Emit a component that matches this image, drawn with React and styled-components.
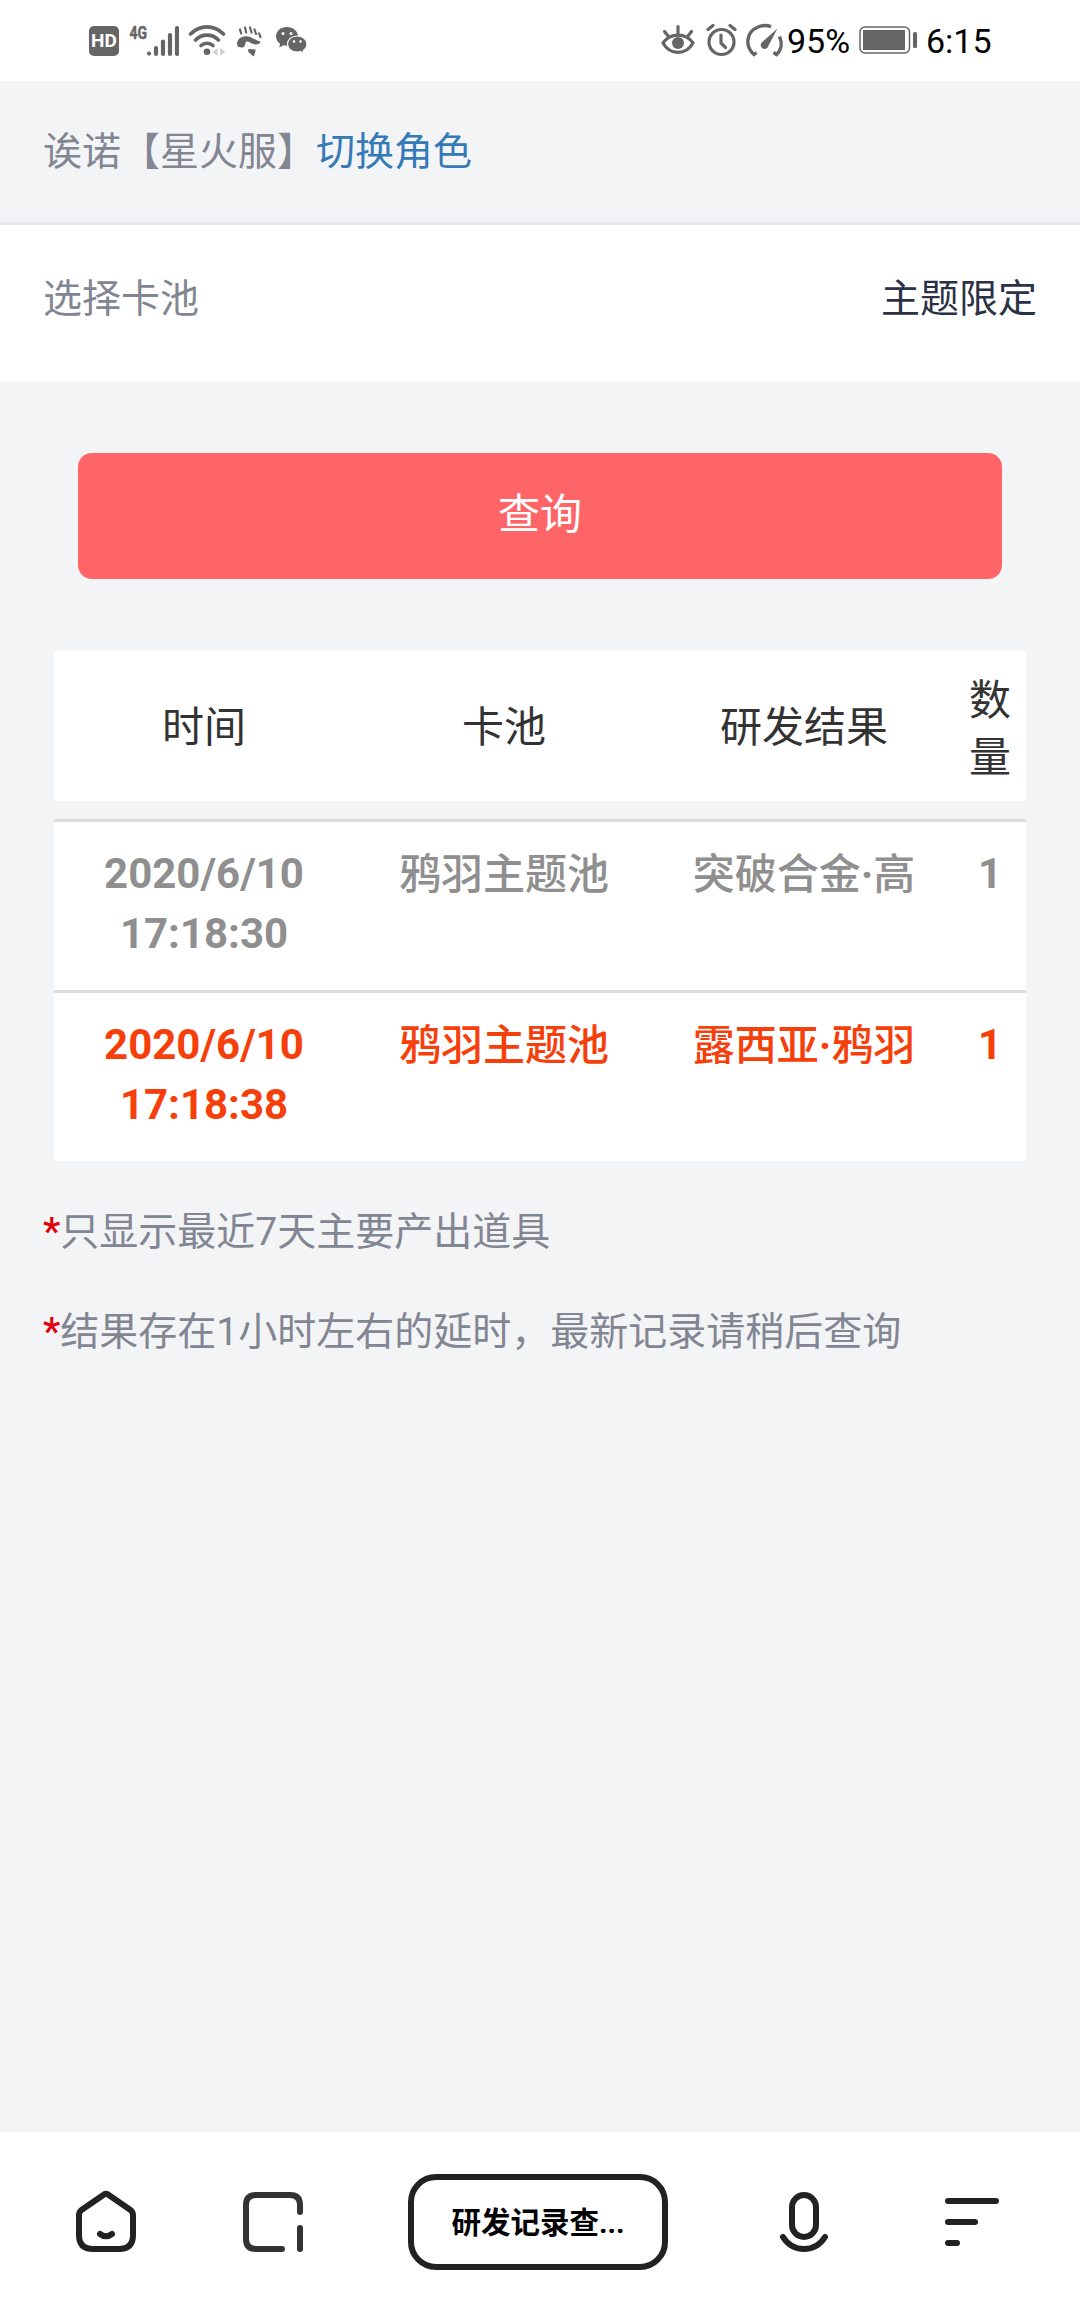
import React from "react";
import styled, { createGlobalStyle } from "styled-components";

const GlobalStyle = createGlobalStyle`
  * {
    box-sizing: border-box;
  }

  body {
    margin: 0;
    background-color: #f3f4f6;
    font-family: Roboto, "Noto Sans CJK SC", sans-serif;
  }
`;

// Styled Components
const Page = styled.div`
  display: flex;
  flex-direction: column;
  width: 1080px;
  height: 2312px;
`;

const StatusBar = styled.header`
  display: flex;
  justify-content: space-between;
  height: 81px;
  padding: 0 90px 0 89px;
  background-color: #fff;
`;

const StatusGroup = styled.div`
  display: flex;
  align-items: center;
  height: 80px;
  color: #656565;
`;

const StatusIcon = styled.svg`
  display: block;
  flex: none;
  margin-left: ${(props) => props.$gap || 0}px;
`;

const StatusText = styled.span`
  width: ${(props) => props.$width}px;
  margin-left: ${(props) => props.$gap}px;
  padding-top: 1px;
  color: #000;
  font-size: 34px;
  line-height: 40px;
  white-space: nowrap;
`;

const HdBadge = styled.span`
  width: 30px;
  height: 30px;
  margin-top: 2px;
  border-radius: 5px;
  background-color: #656565;
  color: #fff;
  font-size: 19px;
  font-weight: 700;
  line-height: 30px;
  text-align: center;
`;

const RoleBar = styled.div`
  height: 144px;
  padding: 42px 43px 0;
  border-bottom: 3px solid #e5e7ea;
  color: #828692;
  font-size: 39px;
  line-height: 58px;
`;

const SwitchLink = styled.a`
  color: #337ab7;
  text-decoration: none;
`;

const PoolRow = styled.div`
  display: flex;
  justify-content: space-between;
  height: 156px;
  padding: 45px 43px 0;
  background-color: #fff;
  color: #828692;
  font-size: 39px;
  line-height: 58px;
`;

const PoolValue = styled.span`
  color: #2b3245;
`;

const QueryButton = styled.button`
  height: 126px;
  margin: 72px 78px 0;
  padding: 0 0 12px;
  border: 0;
  border-radius: 14px;
  background-color: #ff6466;
  color: #fff;
  font-family: inherit;
  font-size: 42px;
`;

const Table = styled.div`
  margin: 72px 54px 0;
`;

const Row = styled.div`
  display: grid;
  grid-template-columns: 300px 300px 300px 72px;
  background-color: #fff;
  font-size: 42px;
  text-align: center;
`;

const HeadRow = styled(Row)`
  align-items: center;
  height: 150px;
  margin-bottom: 18px;
  padding-top: 3px;
  color: #333;
  line-height: 57px;
`;

const RecordRow = styled(Row)`
  height: 171px;
  padding-top: 22px;
  border-top: 3px solid #ddd;
  color: ${(props) => (props.$rare ? "#f5400b" : "#8f8f8f")};
  font-weight: 700;
  line-height: 60px;
`;

const Cell = styled.div`
  padding: 0 ${(props) => props.$pad || 0}px;
`;

const CountHead = styled(Cell)`
  padding: 2px 12px 0;
`;

// the CJK face is drawn one step lighter than the digits
const NameCell = styled(Cell)`
  padding-top: 1px;
  font-weight: 500;
`;

const Dot = styled.b`
  font-weight: 700;
`;

const Notes = styled.div`
  flex: 1;
  padding: 42px 43px 0;
`;

const Note = styled.p`
  margin: 0 0 41.5px;
  color: #828692;
  font-size: 39px;
  line-height: 58px;
`;

const Star = styled.span`
  color: #e3000b;
  font-weight: 500;
`;

const BottomBar = styled.nav`
  display: flex;
  justify-content: space-between;
  align-items: center;
  height: 180px;
  padding: 0 78px 0 76px;
  background-color: #fff;
`;

const NavIcon = styled.svg`
  display: block;
  width: 60px;
  height: 64px;
  margin-bottom: 4px;
  overflow: visible;
  fill: none;
  stroke: ${(props) => props.$color || "#222"};
  stroke-width: 6;
  stroke-linecap: round;
  stroke-linejoin: round;
`;

const TitlePill = styled.div`
  width: 260px;
  height: 96px;
  margin-right: 2px;
  border: 6px solid #222;
  border-radius: 28px;
  color: #000;
  font-size: 29.5px;
  font-weight: 700;
  line-height: 86px;
  text-align: center;
`;

const records = [
  { date: "2020/6/10", time: "17:18:30", pool: "鸦羽主题池", result: ["突破合金", "高"], count: 1 },
  { date: "2020/6/10", time: "17:18:38", pool: "鸦羽主题池", result: ["露西亚", "鸦羽"], count: 1, rare: true },
];

const Status = () => (
  <StatusBar>
    <StatusGroup>
      <HdBadge>HD</HdBadge>
      {/* 4G signal */}
      <StatusIcon $gap={10} width="50" height="44" viewBox="0 -5 50 44">
        <text x="0.5" y="15.5" fontSize="19" fontWeight="700" textLength="17.5" lengthAdjust="spacingAndGlyphs" fill="currentColor" stroke="currentColor" strokeWidth="0.5">4G</text>
        <g stroke="currentColor" strokeWidth="4.200" strokeLinecap="round">
          <path d="M20 30.500v.1M27 25v6M34 18.500v12.500M41 12v19M48 5v26" />
        </g>
      </StatusIcon>
      {/* wifi */}
      <StatusIcon $gap={9} width="38" height="34" viewBox="0 0 38 34">
        <g fill="none" stroke="currentColor" strokeWidth="3.600" strokeLinecap="round">
          <path d="M2.500 11C12 1.500 26 1.500 35.500 11" />
          <path d="M7.500 17C14 10.500 24 10.500 30.500 17" />
          <path d="M13 22.500C16.500 19.500 21.500 19.500 25 22.500" />
        </g>
        <circle cx="19" cy="28.800" r="3.300" fill="currentColor" />
        <path d="M29.500 25v8l-4.500-4zM32 25v8l5.500-4.500z" fill="#cfcfcf" />
      </StatusIcon>
      {/* running foot */}
      <StatusIcon $gap={10} width="28" height="34" viewBox="0 0 28 34">
        <g fill="currentColor">
          <path d="M1 21C1 15.500 6.500 12.500 12 13.500C17 14.300 20 18 24.500 18.500C24 21.500 20 22.500 16 20.500C12.500 18.700 10 17.500 9.500 20C9 22.500 8.500 24.500 5.500 24.500C3 24.500 1 23.500 1 21Z" />
          <path d="M12 26.500C14.500 25 17 27 19.500 26.500C20 29 18.500 30 18 33.500L15.500 32C14.500 30 11.500 29.500 12 26.500Z" />
        </g>
        <path d="M4 6.500L5.200 10.500M9 4.500L10.200 9.500M14 4.500L15.500 9.500M18.500 6.500L20 11M23 10.500L24.500 14" stroke="currentColor" strokeWidth="2.200" strokeLinecap="round" />
      </StatusIcon>
      {/* wechat */}
      <StatusIcon $gap={11} width="33" height="30" viewBox="0 0 33 30">
        <path d="M12 2C5.500 2 1 6.300 1 11.300C1 14.300 2.500 17 5 18.700L4.300 22.500L8.500 20.300C9.700 20.600 10.800 20.700 12 20.700C18 20.700 23 16.500 23 11.300S18 2 12 2Z" fill="currentColor" />
        <path d="M22 11C16.500 11 12.500 14.700 12.500 19S16.500 27 22 27C23.200 27 24.400 26.800 25.500 26.500L29 28.500L28.300 25.400C30.500 23.900 32 21.600 32 19C32 14.700 27.500 11 22 11Z" fill="currentColor" stroke="#fff" strokeWidth="1.200" />
        <g fill="#fff">
          <circle cx="8" cy="8.500" r="1.500" />
          <circle cx="16" cy="8.500" r="1.500" />
          <circle cx="19" cy="16.500" r="1.300" />
          <circle cx="25.500" cy="16.500" r="1.300" />
        </g>
      </StatusIcon>
    </StatusGroup>

    <StatusGroup>
      {/* eye comfort */}
      <StatusIcon width="34" height="32" viewBox="0 0 34 32">
        <g fill="none" stroke="currentColor" strokeWidth="3.200" strokeLinecap="round" strokeLinejoin="round">
          <path d="M2 19C9 8.500 25 8.500 32 19C25 31.500 9 31.500 2 19Z" />
          <path d="M17 2.500v7M3.500 7.500l4 5M30.500 7.500l-4 5" />
        </g>
        <circle cx="17" cy="19" r="6" fill="currentColor" />
      </StatusIcon>
      {/* alarm */}
      <StatusIcon $gap={11} width="31" height="34" viewBox="0 0 31 34">
        <g fill="none" stroke="currentColor" strokeWidth="3.200" strokeLinecap="round" strokeLinejoin="round">
          <circle cx="15.500" cy="19" r="12.500" />
          <path d="M15 12v8l4.500 4.500" />
          <path d="M2 6.500l5-4M29 6.500l-5-4" />
        </g>
      </StatusIcon>
      {/* speed gauge */}
      <StatusIcon $gap={9} width="38" height="34" viewBox="0 0 38 34">
        <g fill="none" stroke="currentColor" strokeWidth="3.400">
          <path d="M10.500 29.500l-2.500 2C-1.500 23 .5 9 11 4.500C15.500 2.300 20.500 2 25 3.700" />
          <path d="M33.500 13.500C36.500 20 35.500 27 30.500 31.500l-3-2" />
        </g>
        <path d="M31.500 5.500L22.500 22.500A3.900 3.900 0 1 1 16.300 19Z" fill="currentColor" />
      </StatusIcon>
      <StatusText $gap={3} $width={64}>95%</StatusText>
      {/* battery */}
      <StatusIcon $gap={8} width="60" height="28" viewBox="0 0 60 28">
        <rect x="1" y="1" width="49.500" height="26" rx="5" fill="none" stroke="currentColor" strokeWidth="1.500" />
        <rect x="4" y="4" width="42" height="20" fill="currentColor" />
        <rect x="54" y="6" width="4" height="16" rx="1.500" fill="currentColor" />
      </StatusIcon>
      <StatusText $gap={7} $width={64}>6:15</StatusText>
    </StatusGroup>
  </StatusBar>
);

const BottomNav = () => (
  <BottomBar>
    <NavIcon viewBox="0 0 60 64">
      <path d="M28 6.500Q30 5 32 6.500L54.500 22Q57 24 57 27V47Q57 61 43 61H17Q3 61 3 47V27Q3 24 5.500 22Z" />
      <path d="M24 46Q30 50.500 36 46" />
    </NavIcon>
    <NavIcon viewBox="0 0 60 64" $color="#333">
      <path d="M40 61H14Q4 61 4 51V17Q4 7 14 7H48Q58 7 58 17V24" />
      <path d="M58 40V61" />
    </NavIcon>
    <TitlePill>研发记录查...</TitlePill>
    <NavIcon viewBox="0 0 60 64">
      <rect x="16" y="7" width="24" height="42" rx="12" />
      <path d="M7 49C17 65 39 65 49 49" />
    </NavIcon>
    <NavIcon viewBox="0 0 60 64">
      <path d="M6 13H54M6 34H33M6 55H15" />
    </NavIcon>
  </BottomBar>
);

const App = () => {
  return (
    <Page>
      <GlobalStyle />
      <Status />
      <RoleBar>
        诶诺【星火服】<SwitchLink>切换角色</SwitchLink>
      </RoleBar>
      <PoolRow>
        <span>选择卡池</span>
        <PoolValue>主题限定</PoolValue>
      </PoolRow>
      <QueryButton>查询</QueryButton>
      <Table>
        <HeadRow>
          <Cell>时间</Cell>
          <Cell>卡池</Cell>
          <Cell>研发结果</Cell>
          <CountHead>数量</CountHead>
        </HeadRow>
        {records.map((item) => (
          <RecordRow key={item.time} $rare={item.rare}>
            <Cell $pad={30}>
              {item.date} {item.time}
            </Cell>
            <NameCell>{item.pool}</NameCell>
            <NameCell>
              {item.result[0]}
              <Dot>·</Dot>
              {item.result[1]}
            </NameCell>
            <Cell>{item.count}</Cell>
          </RecordRow>
        ))}
      </Table>
      <Notes>
        <Note>
          <Star>*</Star>只显示最近7天主要产出道具
        </Note>
        <Note>
          <Star>*</Star>结果存在1小时左右的延时，最新记录请稍后查询
        </Note>
      </Notes>
      <BottomNav />
    </Page>
  );
};

export default App;
